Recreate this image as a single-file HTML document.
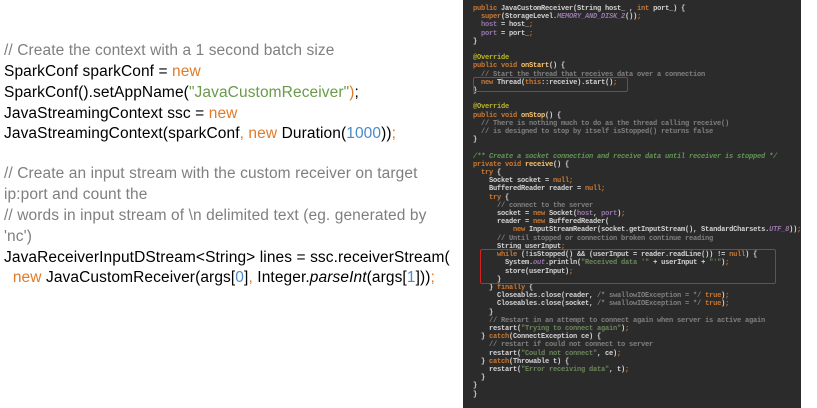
<!DOCTYPE html>
<html><head><meta charset="utf-8"><style>
body{margin:0;width:817px;height:408px;background:#fff;position:relative;overflow:hidden;font-family:"Liberation Sans",sans-serif}
.l{position:absolute;left:4px;font-size:15.5px;letter-spacing:0.1px;color:#000;white-space:nowrap;line-height:21px}
.c{color:#7f7f7f}.o{color:#e07b2a}.g{color:#6a9a4a}.b{color:#4a8ac8}
#p{position:absolute;left:463px;top:0;width:338px;height:408px;background:#2b2b2b}
pre{margin:0;position:absolute;left:10px;top:5px;font-family:"Liberation Mono",monospace;font-size:7px;font-weight:bold;line-height:8.2px;color:#d4d4d4;letter-spacing:-0.2px}
.k{color:#cc7832}.s{color:#6a8759}.m{color:#808080}.a{color:#bbb529}.f{color:#ffc66d}.d{color:#629755;font-style:italic}.v{color:#9876aa}
.box{position:absolute;border:1.5px solid #d92020;border-radius:2px}
</style></head><body>
<div class="l c" style="top:40px">// Create the context with a 1 second batch size</div>
<div class="l" style="top:61px">SparkConf sparkConf = <span class="o">new</span></div>
<div class="l" style="top:82px">SparkConf().setAppName(<span class="g">"JavaCustomReceiver"</span><span class="o">)</span>;</div>
<div class="l" style="top:103px">JavaStreamingContext ssc = <span class="o">new</span></div>
<div class="l" style="top:123px">JavaStreamingContext(sparkConf<span class="o">, new</span> Duration(<span class="b">1000</span>))<span class="o">;</span></div>
<div class="l c" style="top:163px">// Create an input stream with the custom receiver on target</div>
<div class="l c" style="top:184px">ip:port and count the</div>
<div class="l c" style="top:205px">// words in input stream of \n delimited text (eg. generated by</div>
<div class="l c" style="top:226px">'nc')</div>
<div class="l" style="top:247px">JavaReceiverInputDStream&lt;String&gt; lines = ssc.receiverStream(</div>
<div class="l" style="top:267px">&nbsp;&nbsp;<span class="o">new</span> JavaCustomReceiver(args[<span class="b">0</span>]<span class="o">,</span> Integer.<i>parseInt</i>(args[<span class="b">1</span>]))<span class="o">;</span></div>
<div id="p"><pre><span class="k">public</span> JavaCustomReceiver(String host_ , <span class="k">int</span> port_) {
  <span class="k">super</span>(StorageLevel.<i class="v">MEMORY_AND_DISK_2</i>())<span class="k">;</span>
  <span class="v">host</span> = host_<span class="k">;</span>
  <span class="v">port</span> = port_<span class="k">;</span>
}

<span class="a">@Override</span>
<span class="k">public void</span> <span class="f">onStart</span>() {
  <span class="m">// Start the thread that receives data over a connection</span>
  <span class="k">new</span> Thread(<span class="k">this</span>::receive).start()<span class="k">;</span>
}

<span class="a">@Override</span>
<span class="k">public void</span> <span class="f">onStop</span>() {
  <span class="m">// There is nothing much to do as the thread calling receive()</span>
  <span class="m">// is designed to stop by itself isStopped() returns false</span>
}

<span class="d">/** Create a socket connection and receive data until receiver is stopped */</span>
<span class="k">private void</span> <span class="f">receive</span>() {
  <span class="k">try</span> {
    Socket socket = <span class="k">null;</span>
    BufferedReader reader = <span class="k">null;</span>
    <span class="k">try</span> {
      <span class="m">// connect to the server</span>
      socket = <span class="k">new</span> Socket(<span class="v">host</span>, <span class="v">port</span>)<span class="k">;</span>
      reader = <span class="k">new</span> BufferedReader(
          <span class="k">new</span> InputStreamReader(socket.getInputStream(), StandardCharsets.<i class="v">UTF_8</i>))<span class="k">;</span>
      <span class="m">// Until stopped or connection broken continue reading</span>
      String userInput<span class="k">;</span>
      <span class="k">while</span> (!isStopped() &amp;&amp; (userInput = reader.readLine()) != <span class="k">null</span>) {
        System.<i class="v">out</i>.println(<span class="s">"Received data '"</span> + userInput + <span class="s">"'"</span>)<span class="k">;</span>
        store(userInput)<span class="k">;</span>
      }
    } <span class="k">finally</span> {
      Closeables.close(reader, <span class="m">/* swallowIOException = */</span> <span class="k">true</span>)<span class="k">;</span>
      Closeables.close(socket, <span class="m">/* swallowIOException = */</span> <span class="k">true</span>)<span class="k">;</span>
    }
    <span class="m">// Restart in an attempt to connect again when server is active again</span>
    restart(<span class="s">"Trying to connect again"</span>)<span class="k">;</span>
  } <span class="k">catch</span>(ConnectException ce) {
    <span class="m">// restart if could not connect to server</span>
    restart(<span class="s">"Could not connect"</span>, ce)<span class="k">;</span>
  } <span class="k">catch</span>(Throwable t) {
    restart(<span class="s">"Error receiving data"</span>, t)<span class="k">;</span>
  }
}
}</pre>
<div class="box" style="left:10px;top:77px;width:153px;height:13px"></div>
<div class="box" style="left:17px;top:249px;width:294px;height:33px"></div>
</div>
</body></html>
